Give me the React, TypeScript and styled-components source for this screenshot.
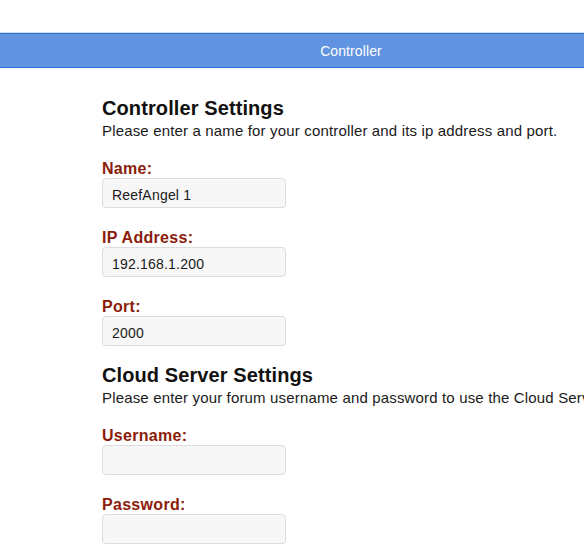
import React from 'react';
import styled, { createGlobalStyle } from 'styled-components';

const GlobalStyle = createGlobalStyle`
  html, body {
    margin: 0;
    padding: 0;
    background: #ffffff;
    font-family: "Liberation Sans", Arial, Helvetica, sans-serif;
    color: #111111;
    overflow-x: hidden;
  }
`;

const Page = styled.div`
  width: 702px;
  padding-top: 33px;
`;

const TitleBar = styled.header`
  height: 33px;
  background-color: #6194e0;
  border-top: 1px solid #2f73d6;
  border-bottom: 1px solid #2f73d6;
  box-shadow: 0 -1px 0 #c9dbf5;
  display: flex;
  align-items: center;
  justify-content: center;
  color: #ffffff;
  font-size: 14px;
  letter-spacing: 0.1px;
`;

const Content = styled.main`
  padding: 28px 0 0 102px;
  display: flex;
  flex-direction: column;
  gap: 17px;
`;

const Section = styled.section`
  display: flex;
  flex-direction: column;
`;

const SectionTitle = styled.h2`
  margin: 0;
  font-size: 20px;
  line-height: 25px;
  font-weight: 700;
  color: #111111;
  letter-spacing: 0.1px;
`;

const SectionText = styled.p`
  margin: 0 0 20px;
  font-size: 15px;
  line-height: 19px;
  letter-spacing: 0.16px;
  white-space: nowrap;
  color: #1a1a1a;
`;

const Fields = styled.div`
  display: flex;
  flex-direction: column;
  gap: 21px;
`;

const Field = styled.div`
  display: flex;
  flex-direction: column;
`;

const Label = styled.label`
  font-size: 16px;
  line-height: 18px;
  font-weight: 700;
  letter-spacing: 0.3px;
  color: #8c1c0a;
`;

const TextInput = styled.input`
  box-sizing: border-box;
  width: 184px;
  height: 30px;
  padding: 3px 9px 0;
  background: #f7f7f7;
  border: 1px solid #dcdcdc;
  border-radius: 4px;
  font-family: inherit;
  font-size: 14px;
  letter-spacing: 0.2px;
  color: #1a1a1a;
  outline: none;
`;

interface FieldDef {
  id: string;
  label: string;
  value: string;
  type?: string;
}

const controllerFields: FieldDef[] = [
  { id: 'name', label: 'Name:', value: 'ReefAngel 1' },
  { id: 'ip', label: 'IP Address:', value: '192.168.1.200' },
  { id: 'port', label: 'Port:', value: '2000' },
];

const cloudFields: FieldDef[] = [
  { id: 'username', label: 'Username:', value: '' },
  { id: 'password', label: 'Password:', value: '', type: 'password' },
];

const SettingsSection: React.FC<{ title: string; text: string; fields: FieldDef[] }> = ({
  title,
  text,
  fields,
}) => (
  <Section>
    <SectionTitle>{title}</SectionTitle>
    <SectionText>{text}</SectionText>
    <Fields>
      {fields.map((f) => (
        <Field key={f.id}>
          <Label htmlFor={f.id}>{f.label}</Label>
          <TextInput id={f.id} type={f.type || 'text'} defaultValue={f.value} />
        </Field>
      ))}
    </Fields>
  </Section>
);

export default function App() {
  return (
    <>
      <GlobalStyle />
      <Page>
        <TitleBar>Controller</TitleBar>
        <Content>
          <SettingsSection
            title="Controller Settings"
            text="Please enter a name for your controller and its ip address and port."
            fields={controllerFields}
          />
          <SettingsSection
            title="Cloud Server Settings"
            text="Please enter your forum username and password to use the Cloud Server."
            fields={cloudFields}
          />
        </Content>
      </Page>
    </>
  );
}
